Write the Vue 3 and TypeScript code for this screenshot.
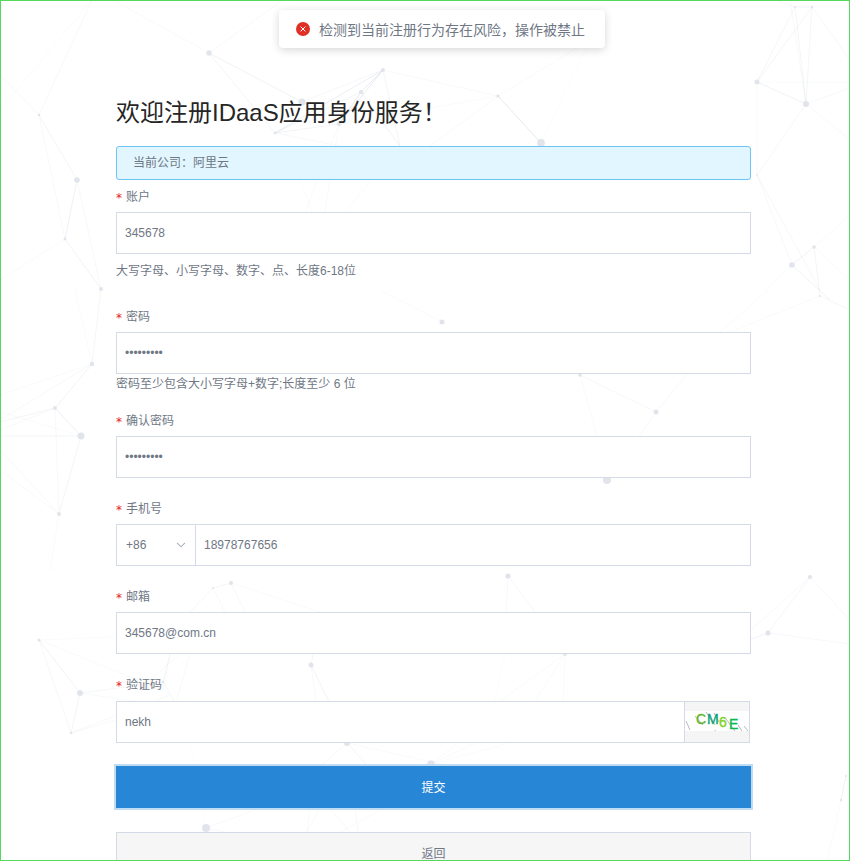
<script setup lang="ts">
type Edge = [number, number, number, number, number]
const nodes: [number, number, number][] = [
  [209,53,2.7],[383,70,2],[361,92,2.2],[302,102,3.6],[275,133,1.4],[339,124,2.3],[39,115,1.2],[77,180,2.8],[65,239,1.4],[101,289,2],
  [498,96,1.6],[541,143,3.9],[757,82,2.5],[806,104,3],[795,7,1],[812,7,1.2],[757,175,.8],[814,247,1.8],[792,265,2.8],[820,296,1],
  [92,364,2.3],[55,408,2],[81,436,3.5],[59,514,2],[442,322,2.5],[580,375,1.8],[656,412,2.5],[607,480,4],[508,576,2.6],[810,577,2.1],
  [231,583,2],[213,588,1],[39,640,1.6],[80,693,3],[71,733,1.2],[311,665,2.5],[163,682,1.2],[347,743,3],[206,828,4],[768,633,2.6],[431,764,3.8],[565,654,2],[846,776,1],[841,800,1.2]
]
const edges: Edge[] = [
  [209,53,302,102,.13],[209,53,275,133,.1],[209,53,283,0,.07],[209,53,113,0,.06],
  [39,115,92,0,.07],[39,115,0,75,.07],[39,115,77,180,.1],[77,180,65,239,.14],[39,115,65,239,.06],[65,239,101,289,.12],[77,180,101,289,.07],[65,239,0,280,.05],[0,110,92,0,.04],
  [101,289,92,364,.09],[92,364,55,408,.12],[55,408,81,436,.16],[55,408,0,422,.1],[55,408,0,430,.07],[92,364,0,420,.07],[92,364,0,395,.05],[81,436,0,436,.1],[81,436,0,412,.05],[81,436,59,514,.1],[55,408,59,514,.07],[59,514,0,450,.06],[59,514,0,470,.05],[59,514,50,571,.05],[92,364,75,290,.05],
  [383,70,275,133,.17],[383,70,361,92,.2],[383,70,339,124,.2],[383,70,302,102,.08],[383,70,400,146,.1],[361,92,275,133,.12],[361,92,400,146,.12],[339,124,275,133,.12],[339,124,361,92,.12],[361,92,339,124,.1],[498,96,541,143,.22],[498,96,383,70,.06],[498,96,430,146,.06],[498,96,339,124,.05],[498,96,590,40,.05],[590,40,541,143,.03],[339,124,305,212,.05],[339,124,325,212,.05],[400,146,345,212,.05],[300,180,312,212,.04],[275,133,340,146,.06],
  [757,82,806,104,.13],[806,104,795,7,.1],[806,104,812,7,.09],[757,82,795,7,.09],[757,82,812,7,.1],[795,7,812,7,.12],[795,7,775,0,.08],[812,7,850,60,.08],[790,0,806,104,.07],[757,82,850,82,.05],[806,104,850,88,.07],[806,104,850,140,.06],[806,104,757,175,.08],[757,82,757,175,.06],[757,175,792,265,.07],[757,175,820,290,.08],[814,247,792,265,.13],[814,247,850,215,.05],[814,247,850,280,.05],[814,247,820,296,.1],[792,265,830,300,.12],[792,265,765,290,.05],[820,296,850,310,.08],[820,296,730,332,.05],[768,290,720,332,.05],
  [442,322,380,290,.05],[580,375,656,412,.08],[580,375,597,436,.05],[656,412,639,436,.07],[656,412,687,374,.07],
  [231,583,213,588,.1],[231,583,245,612,.07],[231,583,320,612,.05],[213,588,190,612,.07],[213,588,225,612,.06],[39,640,80,693,.12],[39,640,71,733,.08],[39,640,116,637,.04],[39,640,150,685,.05],[80,693,71,733,.11],[80,693,163,682,.08],[80,693,160,705,.06],[71,733,170,695,.07],[71,733,116,720,.06],[311,665,322,612,.09],[311,665,329,702,.12],[311,665,316,702,.07],[163,682,175,702,.1],[170,654,163,682,.08],[170,654,163,690,.06],[190,654,176,702,.06],[180,654,150,680,.06],[508,576,506,612,.07],[508,576,535,612,.08],
  [768,633,810,577,.1],[768,633,751,639,.12],[768,633,850,644,.07],[810,577,850,620,.07],[810,577,751,630,.06],
  [347,743,320,766,.08],[347,743,368,766,.1],[347,743,450,766,.05],[565,654,500,701,.05],[565,654,535,701,.05],[565,654,563,701,.05],[505,654,495,701,.03],[431,764,458,743,.06],[431,764,475,743,.05],[431,764,510,743,.04],[206,828,260,808,.06],[206,828,225,832,.06],[190,743,206,828,.03],[310,808,307,832,.06],[320,808,307,832,.06],[330,808,350,832,.07],[385,808,340,832,.05],[355,808,358,832,.07],
  [846,776,841,800,.14],[841,800,827,861,.05]
]
</script>

<template>
  <div class="page">
    <svg class="net" width="850" height="861" viewBox="0 0 850 861" aria-hidden="true">
      <line v-for="(e, i) in edges" :key="'e' + i" :x1="e[0]" :y1="e[1]" :x2="e[2]" :y2="e[3]" stroke="#8d9ab8" stroke-width="1" :stroke-opacity="e[4]" />
      <circle v-for="(n, i) in nodes" :key="'n' + i" :cx="n[0]" :cy="n[1]" :r="n[2]" fill="#e1e5eb" />
    </svg>

    <div class="toast">
      <svg class="toast-icon" width="14" height="14" viewBox="0 0 14 14" aria-hidden="true">
        <circle cx="7" cy="7" r="7" fill="#e02f27" />
        <path d="M4.6 4.6l4.8 4.8M9.4 4.6l-4.8 4.8" stroke="#fff" stroke-width="1" fill="none" />
      </svg>
      <span>检测到当前注册行为存在风险，操作被禁止</span>
    </div>

    <form class="form">
      <h1 class="title">欢迎注册IDaaS应用身份服务！</h1>
      <div class="alert">当前公司：阿里云</div>

      <div class="item">
        <label class="label"><i class="star">*</i>账户</label>
        <input class="input" type="text" value="345678" />
        <p class="help help-tall">大写字母、小写字母、数字、点、长度6-18位</p>
      </div>

      <div class="item">
        <label class="label"><i class="star">*</i>密码</label>
        <input class="input" type="password" value="123456789" />
        <p class="help">密码至少包含大小写字母+数字;长度至少 6 位</p>
      </div>

      <div class="item item-narrow">
        <label class="label"><i class="star">*</i>确认密码</label>
        <input class="input" type="password" value="123456789" />
      </div>

      <div class="item">
        <label class="label"><i class="star">*</i>手机号</label>
        <div class="group">
          <div class="select">
            <span>+86</span>
            <svg width="10" height="6" viewBox="0 0 10 6" aria-hidden="true">
              <path d="M1 .8l4 4 4-4" stroke="#a9b1bc" stroke-width="1.1" fill="none" />
            </svg>
          </div>
          <input class="input bare" type="text" value="18978767656" />
        </div>
      </div>

      <div class="item">
        <label class="label"><i class="star">*</i>邮箱</label>
        <input class="input" type="text" value="345678@com.cn" />
      </div>

      <div class="item item-captcha">
        <label class="label"><i class="star">*</i>验证码</label>
        <div class="group group-captcha">
          <input class="input bare" type="text" value="nekh" />
          <div class="captcha">
            <svg class="captcha-img" width="64" height="20" viewBox="0 0 64 20" aria-label="验证码图片">
              <rect width="64" height="20" fill="#fff" />
              <g stroke="#9a9a9a" stroke-width=".7" fill="none">
                <path d="M1 10l4 9M10 5l8 9M21 1l9 13M29 2l5 9M41 8l9 12M53 14l4 6M59 15l4 5M30 19l1 2" />
              </g>
              <text x="11" y="13" fill="#5ab52e" stroke="#5ab52e" class="cap">C</text>
              <text x="22" y="13" fill="#0aa37a" stroke="#0aa37a" class="cap">M</text>
              <text x="34" y="16" fill="#7ed321" stroke="#7ed321" class="cap">6</text>
              <text x="44" y="18" fill="#09b84f" stroke="#09b84f" class="cap">E</text>
            </svg>
          </div>
        </div>
      </div>

      <button class="btn primary" type="button">提交</button>
      <button class="btn back" type="button">返回</button>
    </form>
  </div>
</template>

<style>
html, body { margin: 0; height: 861px; overflow: hidden; background: #fff; }
</style>

<style scoped>
.page {
  position: relative;
  box-sizing: border-box;
  width: 850px;
  height: 861px;
  overflow: hidden;
  border: 1px solid #55d85c;
  background: #fff;
  font-family: "Liberation Sans", "Noto Sans CJK SC", sans-serif;
  font-size: 12px;
  color: #6f7785;
}
.net { position: absolute; left: -1px; top: -1px; }
.toast {
  position: absolute;
  left: 278px;
  top: 9px;
  box-sizing: border-box;
  width: 326px;
  height: 38px;
  padding-left: 17px;
  display: flex;
  align-items: center;
  gap: 9px;
  background: #fff;
  border-radius: 4px;
  box-shadow: 0 2px 8px rgba(0, 0, 0, .16);
  font-size: 14px;
  color: #6f7785;
  z-index: 2;
}
.toast-icon { flex: none; }
.form {
  position: relative;
  width: 635px;
  margin-left: 115px;
  padding-top: 95px;
}
.title {
  margin: 0;
  height: 50px;
  line-height: 34px;
  font-size: 24px;
  font-weight: 400;
  color: #262626;
}
.alert {
  box-sizing: border-box;
  height: 34px;
  line-height: 33px;
  padding-left: 16px;
  background: #e1f6fe;
  border: 1px solid #6cc5f5;
  border-radius: 3px;
}
.label {
  display: block;
  height: 32px;
  line-height: 34px;
}
.star {
  display: inline-block;
  width: 10px;
  font-style: normal;
  color: #e2231a;
  font-family: "DejaVu Sans", sans-serif;
  font-size: 12px;
  line-height: 1;
  vertical-align: -1px;
}
.item + .item { margin-top: 14px; }
.item-narrow { margin-top: 12px !important; }
.item-captcha .label { height: 33px; }
.input {
  display: block;
  box-sizing: border-box;
  width: 100%;
  height: 42px;
  padding: 0 8px;
  border: 1px solid #d5dbe6;
  border-radius: 0;
  outline: none;
  background: #fff;
  color: #6f7785;
  font: 12px "Liberation Sans", "Noto Sans CJK SC", sans-serif;
}
.help { margin: 0; height: 18px; line-height: 20px; }
.help-tall { height: 32px; line-height: 34px; }
.group {
  display: flex;
  box-sizing: border-box;
  height: 42px;
  border: 1px solid #d5dbe6;
  background: #fff;
}
.select {
  flex: none;
  box-sizing: border-box;
  width: 79px;
  padding: 0 9px;
  display: flex;
  align-items: center;
  justify-content: space-between;
  border-right: 1px solid #d5dbe6;
}
.input.bare { flex: 1; min-width: 0; height: 40px; border: none; background: transparent; }
.group-captcha { width: 634px; }
.captcha {
  flex: none;
  box-sizing: border-box;
  width: 65px;
  padding-top: 9px;
  background: #f5f5f6;
  border-left: 1px solid #d5dbe6;
}
.captcha-img { display: block; }
.cap { font: 14px "Liberation Sans", sans-serif; stroke-width: .35px; }
.btn {
  display: block;
  box-sizing: border-box;
  width: 100%;
  height: 42px;
  padding: 0 0 2px;
  font: 12px "Liberation Sans", "Noto Sans CJK SC", sans-serif;
  border-radius: 0;
}
.primary {
  margin-top: 23px;
  border: none;
  background: #2786d5;
  color: #fff;
  outline: 2px solid #bfdcf3;
}
.back {
  margin-top: 24px;
  border: 1px solid #d5dbe6;
  background: #f6f6f7;
  color: #6f7785;
}
</style>
